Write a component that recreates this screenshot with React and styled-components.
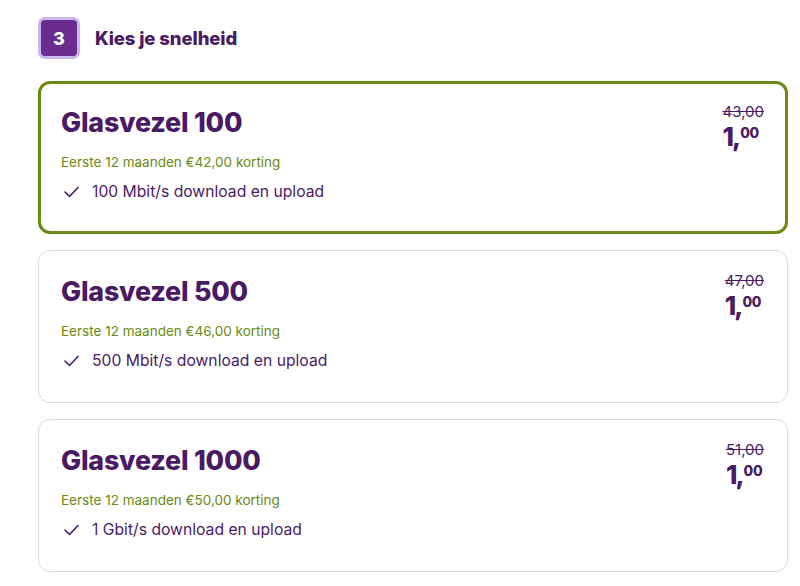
import React from "react";
import styled, { createGlobalStyle } from "styled-components";

const Global = createGlobalStyle`
  html, body { margin: 0; padding: 0; background: #fff; }
  body { font-family: Inter, "Noto Sans", sans-serif; color: #4a1a63; }
`;

const Page = styled.div`
  width: 800px;
  height: 586px;
  box-sizing: border-box;
  padding: 17px 12px 0 38px;
  display: flex;
  flex-direction: column;
  overflow: hidden;
`;

const Header = styled.div`
  display: flex;
  align-items: center;
  gap: 15px;
  height: 42px;
  margin-bottom: 22px;
`;

const StepBadge = styled.div`
  width: 36px;
  height: 36px;
  box-sizing: content-box;
  border: 3px solid #c9b7f2;
  border-radius: 7px;
  background: #6a2c8e;
  color: #fff;
  font-weight: 800;
  font-size: 18px;
  display: flex;
  align-items: center;
  justify-content: center;
`;

const Heading = styled.h2`
  margin: 0;
  font-size: 18.5px;
  font-weight: 800;
  color: #4a1a63;
  letter-spacing: -0.1px;
`;

const List = styled.div`
  display: flex;
  flex-direction: column;
  gap: 16px;
`;

const Card = styled.div`
  box-sizing: border-box;
  height: 153px;
  border-radius: 12px;
  border: ${(p) => (p.$selected ? "3px solid #6a8a12" : "1px solid #dcdcdc")};
  padding: ${(p) => (p.$selected ? "21px 21px 0 20px" : "23px 23px 0 22px")};
  display: flex;
  justify-content: space-between;
  background: #fff;
`;

const Info = styled.div`
  display: flex;
  flex-direction: column;
`;

const Title = styled.div`
  font-size: 26.8px;
  font-weight: 800;
  line-height: 36px;
  margin-top: -1px;
  margin-bottom: 1px;
  color: #4a1a63;
  letter-spacing: -0.2px;
`;

const Discount = styled.div`
  margin-top: 12px;
  font-size: 13.5px;
  line-height: 18px;
  color: #6a8a12;
`;

const Feature = styled.div`
  margin-top: 10px;
  display: flex;
  align-items: center;
  gap: 13px;
  font-size: 15.7px;
  line-height: 22px;
  color: #4a1a63;
  padding-left: 3px;
`;

const Price = styled.div`
  display: flex;
  flex-direction: column;
  align-items: flex-start;
`;

const OldPrice = styled.div`
  font-size: 15px;
  line-height: 14px;
  text-decoration: line-through;
  color: #4a1a63;
`;

const NewPrice = styled.div`
  display: flex;
  align-items: flex-start;
  margin-top: 4px;
  color: #4a1a63;
`;

const Whole = styled.span`
  font-size: 26px;
  font-weight: 800;
  line-height: 28px;
  letter-spacing: -2px;
`;

const Cents = styled.span`
  font-size: 14px;
  font-weight: 800;
  line-height: 14px;
  margin-top: 3px;
  margin-left: 1px;
  letter-spacing: -0.3px;
`;

const Check = () => (
  <svg width="15" height="12" viewBox="0 0 15 12" fill="none">
    <path d="M1 6 L5.5 10.5 L14 1.5" stroke="#4a1a63" strokeWidth="1.6" strokeLinecap="round" strokeLinejoin="round" />
  </svg>
);

const plans = [
  { name: "Glasvezel 100", korting: "€42,00", old: "43,00", feature: "100 Mbit/s download en upload", selected: true },
  { name: "Glasvezel 500", korting: "€46,00", old: "47,00", feature: "500 Mbit/s download en upload" },
  { name: "Glasvezel 1000", korting: "€50,00", old: "51,00", feature: "1 Gbit/s download en upload" },
];

export default function App() {
  return (
    <>
      <Global />
      <Page>
        <Header>
          <StepBadge>3</StepBadge>
          <Heading>Kies je snelheid</Heading>
        </Header>
        <List>
          {plans.map((p) => (
            <Card key={p.name} $selected={p.selected}>
              <Info>
                <Title>{p.name}</Title>
                <Discount>Eerste 12 maanden {p.korting} korting</Discount>
                <Feature>
                  <Check />
                  <span>{p.feature}</span>
                </Feature>
              </Info>
              <Price>
                <OldPrice>{p.old}</OldPrice>
                <NewPrice>
                  <Whole>1,</Whole>
                  <Cents>00</Cents>
                </NewPrice>
              </Price>
            </Card>
          ))}
        </List>
      </Page>
    </>
  );
}
